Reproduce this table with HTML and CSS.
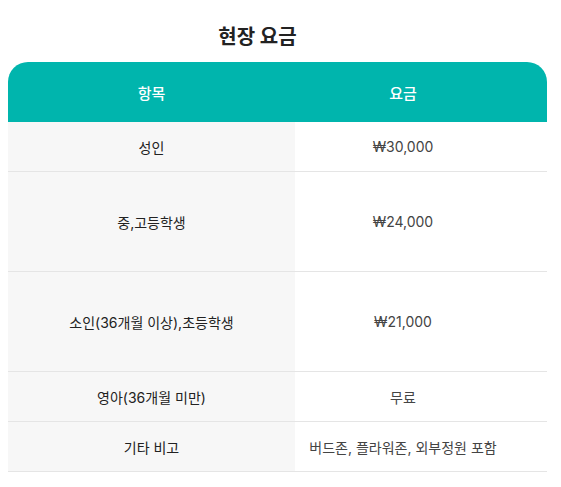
FILE: index.html
```html
<!DOCTYPE html>
<html lang="ko">
<head>
<meta charset="utf-8">
<link rel="stylesheet" href="styles.css">
</head>
<body>
<h2 class="title">현장 요금</h2>
<table class="fee">
  <thead>
    <tr><th class="c1">항목</th><th class="c2">요금</th></tr>
  </thead>
  <tbody>
    <tr class="short"><td class="c1">성인</td><td class="c2">₩30,000</td></tr>
    <tr class="tall"><td class="c1">중,고등학생</td><td class="c2">₩24,000</td></tr>
    <tr class="tall"><td class="c1">소인(36개월 이상),초등학생</td><td class="c2">₩21,000</td></tr>
    <tr class="short"><td class="c1">영아(36개월 미만)</td><td class="c2">무료</td></tr>
    <tr class="short"><td class="c1">기타 비고</td><td class="c2">버드존, 플라워존, 외부정원 포함</td></tr>
  </tbody>
</table>
</body>
</html>
```
FILE: styles.css
```css
body {
  margin: 8px;
  font-family: Inter, "Noto Sans CJK KR", sans-serif;
  background: #fff;
}
.title {
  margin: 0;
  width: 499px;
  height: 54px;
  display: flex;
  align-items: center;
  justify-content: center;
  font-size: 20px;
  font-weight: 700;
  color: #222;
}
.fee {
  width: 539px;
  border-collapse: separate;
  border-spacing: 0;
  table-layout: fixed;
  font-size: 14px;
}
.fee .c1 { width: 287px; }
.fee th {
  background: #00b5ad;
  color: #fff;
  height: 60px;
  padding: 0;
  font-weight: 500;
  font-size: 15px;
}
.fee th.c1 { border-top-left-radius: 20px; }
.fee th.c2 { border-top-right-radius: 20px; padding-right: 36px; }
.fee td {
  padding: 0;
  text-align: center;
  border-bottom: 1px solid #e5e5e5;
}
.fee td.c1 {
  background: #f7f7f7;
  color: #222;
}
.fee td.c2 {
  color: #444;
  padding-right: 36px;
}
.fee tr.short td { height: 49px; }
.fee tr.tall td { height: 99px; }
```
